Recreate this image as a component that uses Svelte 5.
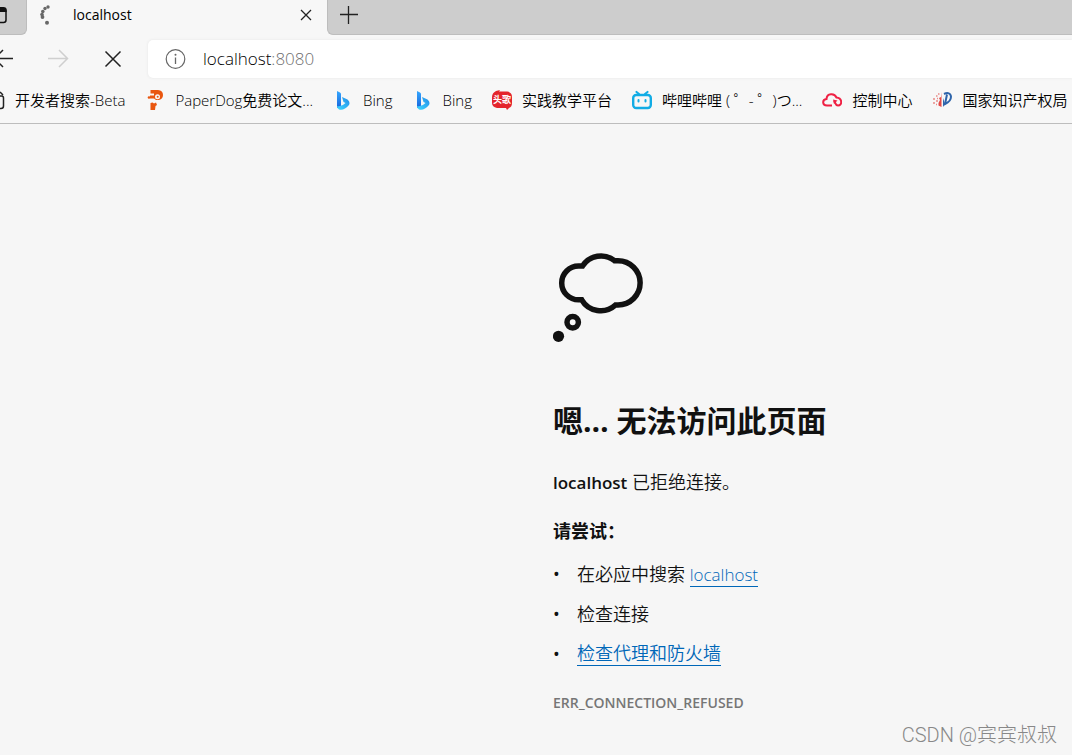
<script lang="ts">
  interface Bookmark {
    icon: string;
    label: string;
  }

  const bookmarks: Bookmark[] = [
    { icon: 'paperdog', label: 'PaperDog免费论文...' },
    { icon: 'bing', label: 'Bing' },
    { icon: 'bing', label: 'Bing' },
    { icon: 'touge', label: '实践教学平台' },
    { icon: 'bilibili', label: '哔哩哔哩 ( ゜- ゜)つ...' },
    { icon: 'cloud', label: '控制中心' },
    { icon: 'patent', label: '国家知识产权局' }
  ];

  let address = $state('localhost:8080');
  let host = $derived(address.split(':')[0]);
</script>

<div class="browser">
  <header>
    <div class="tabs">
      <button class="tab-actions" aria-label="Tab actions">
        <svg width="10" height="28" viewBox="0 0 10 28">
          <path d="M0 9H3.500Q6 9 6 11.500V20Q6 22.500 3.500 22.500H0" fill="none" stroke="#111" stroke-width="1.500" />
          <path d="M0 7H3.500Q6.700 7 6.700 10V12H0Z" fill="#111" />
        </svg>
      </button>
      <div class="tab">
        <svg width="20" height="24" viewBox="0 0 20 24" fill="#686868">
          <circle cx="13" cy="4" r="1.700" />
          <circle cx="10" cy="5.500" r="1.700" />
          <circle cx="7.800" cy="8.500" r="1.800" />
          <circle cx="7" cy="11.500" r="1.800" />
          <circle cx="7.500" cy="14" r="1.900" />
          <circle cx="12" cy="19.700" r="2" />
        </svg>
        <span class="tab-title">{host}</span>
        <button class="tab-close" aria-label="Close tab">
          <svg width="12" height="12" viewBox="0 0 12 12">
            <path d="M1 1L11 11M11 1L1 11" stroke="#222" stroke-width="1.300" />
          </svg>
        </button>
      </div>
      <div class="strip">
        <button aria-label="New tab">
          <svg width="20" height="20" viewBox="0 0 20 20">
            <path d="M9.500 1V19M1 9.500H19" stroke="#222" stroke-width="1.300" />
          </svg>
        </button>
      </div>
    </div>

    <nav class="toolbar">
      <button class="back" aria-label="Back">
        <svg width="14" height="20" viewBox="0 0 14 20">
          <path d="M13 9.500H-5M3 1L-5.500 9.500L3 18" fill="none" stroke="#222" stroke-width="1.500" />
        </svg>
      </button>
      <button class="forward" aria-label="Forward" disabled>
        <svg width="22" height="20" viewBox="0 0 22 20">
          <path d="M0 9.500H19M11 1L19.500 9.500L11 18" fill="none" stroke="#cfcfcf" stroke-width="1.500" />
        </svg>
      </button>
      <button class="stop" aria-label="Stop">
        <svg width="18" height="18" viewBox="0 0 18 18">
          <path d="M1.500 1.500L16.500 16.500M16.500 1.500L1.500 16.500" stroke="#222" stroke-width="1.500" />
        </svg>
      </button>
      <div class="address">
        <button aria-label="Site information">
          <svg width="22" height="22" viewBox="0 0 22 22">
            <circle cx="11.500" cy="11" r="9.300" fill="none" stroke="#666" stroke-width="1.200" />
            <path d="M11.500 9.500V16" stroke="#666" stroke-width="1.300" />
            <circle cx="11.500" cy="6.700" r="1" fill="#666" />
          </svg>
        </button>
        <a class="url" href="http://localhost:8080">{host}<span class="port">:8080</span></a>
      </div>
    </nav>

    <nav class="bookmarks">
      <a href="#beta" class="first">
        <svg width="5" height="20" viewBox="0 0 5 20">
          <path d="M0 2L3 5M0 6H1.500Q3.500 6 3.500 8V16Q3.500 18.500 1 18.500H0" fill="none" stroke="#222" stroke-width="1.500" />
        </svg>
        <span>开发者搜索-Beta</span>
      </a>
      {#each bookmarks as bookmark}
        <a href="#{bookmark.icon}">
          <svg width="20" height="20" viewBox="0 0 20 20">
            {#if bookmark.icon === 'paperdog'}
              <path d="M5.500 0H13Q18 0.500 18 5Q18 9 14 10H11L9 8.500H5V5.500H9V3.500H5.500Z" fill="#e9560f" />
              <path d="M5.500 13L7.500 12.500L9 13.500L11 12.500L12 15L10.500 16L10 20H5.500Z" fill="#e9560f" />
              <circle cx="12.500" cy="6.800" r="2.500" fill="#f7f7f7" />
              <circle cx="12.700" cy="6.800" r="1" fill="#e9560f" />
              <circle cx="4" cy="7.500" r="1.300" fill="#e9560f" />
            {:else if bookmark.icon === 'bing'}
              <defs>
                <linearGradient id="bing-stem" x1="0" y1="0" x2="0" y2="1">
                  <stop offset="0" stop-color="#36a8ff" />
                  <stop offset="1" stop-color="#1764dc" />
                </linearGradient>
                <linearGradient id="bing-bowl" x1="0" y1="1" x2="1" y2="0">
                  <stop offset="0" stop-color="#3ed8ff" />
                  <stop offset="1" stop-color="#248be8" />
                </linearGradient>
              </defs>
              <path d="M4 1L7 2.500Q8 3 8 4V16L4 18Z" fill="url(#bing-stem)" />
              <path d="M9 7L14.500 9.500Q17.500 12 16 15Q11 21 6 19.500Q4 18.500 4 16Q9 17 12.500 13L10.500 12Z" fill="url(#bing-bowl)" />
            {:else if bookmark.icon === 'touge'}
              <path d="M4 1L8 0L7 1.500H15Q20 2 20 7V13Q20 17 17 18L15 20L14 18H5Q0 17 0 13V7Q0 3 4 1Z" fill="#e4252c" />
              <text x="10" y="13" text-anchor="middle" class="badge-text">头歌</text>
            {:else if bookmark.icon === 'bilibili'}
              <rect x="1.200" y="5" width="17.600" height="13" rx="3" fill="none" stroke="#11ace5" stroke-width="2.400" />
              <path d="M4.500 2L7 4M15.500 2L13 4" stroke="#11ace5" stroke-width="2.200" stroke-linecap="round" />
              <path d="M6.500 10V11.500M13.500 10V11.500" stroke="#11ace5" stroke-width="2" stroke-linecap="round" />
            {:else if bookmark.icon === 'cloud'}
              <path d="M10 15.500H5C0 15.500 0 9.500 4.500 9C5 3 12.500 3 14.500 7.500C20.500 8 20.500 15.500 16 15.500C13 15.500 14 13 12 11" fill="none" stroke="#ef2144" stroke-width="2" />
              <path d="M11 9.500L15.500 10.500L12 14Z" fill="#ef2144" />
            {:else}
              <path d="M9.500 2V17L6.500 15.500V13L8 10L7 8L9 7Z" fill="#e34845" />
              <path d="M12 4C20 0 22 10 13 14L15 4.500" fill="none" stroke="#2e64aa" stroke-width="2" />
              <path d="M11 8V17L13 14Z" fill="#2e64aa" />
              <path d="M1 9H3M4 6H5.500M4 11H6M1 13H3M5 8.500H6M4 14.500H5M6 4H7.500" stroke="#e98a88" stroke-width="1.500" />
            {/if}
          </svg>
          <span>{bookmark.label}</span>
        </a>
      {/each}
    </nav>
  </header>

  <main>
    <svg class="thought" width="92" height="92" viewBox="0 0 92 92">
      <path
        d="M29.500 16H25.600A16.900 16.900 0 0 0 25.600 49.800H28.700A22 22 0 0 0 62.500 55H65A22.100 22.100 0 0 0 65 10.700H61.500A22 22 0 0 0 29.500 16Z"
        fill="none"
        stroke="#111"
        stroke-width="5.500"
      />
      <circle cx="19.700" cy="72.300" r="5.700" fill="none" stroke="#111" stroke-width="5.500" />
      <circle cx="5.500" cy="86.300" r="5.600" fill="#111" />
    </svg>
    <h1>嗯… 无法访问此页面</h1>
    <p class="reason"><strong>{host}</strong> 已拒绝连接。</p>
    <h2>请尝试：</h2>
    <ul>
      <li><span>在必应中搜索 <a class="host-link" href="#search">{host}</a></span></li>
      <li><span>检查连接</span></li>
      <li><a href="#proxy">检查代理和防火墙</a></li>
    </ul>
    <p class="code">ERR_CONNECTION_REFUSED</p>
  </main>
  <div class="watermark">CSDN @宾宾叔叔</div>
</div>

<style>
  :global(body) {
    margin: 0;
    background: #f6f6f6;
  }

  .browser {
    position: relative;
    box-sizing: border-box;
    min-height: 100vh;
    overflow: hidden;
    background: #f6f6f6;
    color: #111;
    font-family: "Open Sans", "Noto Sans CJK SC", sans-serif;
  }

  header {
    background: #f7f7f7;
    border-bottom: 1px solid #bdbdbd;
    color: #000;
  }

  button {
    display: flex;
    align-items: center;
    padding: 0;
    border: 0;
    background: none;
  }

  svg {
    display: block;
    flex: none;
  }

  a {
    color: inherit;
    text-decoration: none;
  }

  .tabs {
    display: flex;
    height: 35px;
    font-size: 14px;
    line-height: 20px;
  }

  .tab-actions {
    align-items: flex-start;
    width: 27px;
    background: #cdcdcd;
    border-right: 1px solid #bdbdbd;
    border-bottom: 1px solid #bdbdbd;
    border-radius: 0 0 6px 0;
  }

  .tab {
    display: flex;
    align-items: center;
    box-sizing: border-box;
    width: 300px;
    padding: 0 15px 5px 8px;
  }

  .tab-title {
    flex: 1;
    padding-left: 18px;
  }

  .strip {
    display: flex;
    flex: 1;
    padding-left: 11px;
    padding-bottom: 5px;
    background: #cdcdcd;
    border-left: 1px solid #bdbdbd;
    border-bottom: 1px solid #bdbdbd;
    border-radius: 0 0 0 6px;
  }

  .toolbar {
    display: flex;
    align-items: center;
    height: 47px;
  }

  .forward {
    margin-left: 34px;
  }

  .stop {
    margin-left: 34px;
  }

  .address {
    display: flex;
    flex: 1;
    align-items: center;
    gap: 17px;
    height: 38px;
    margin-left: 26px;
    padding-left: 16px;
    background: #fff;
    border-radius: 5px 0 0 5px;
    box-shadow: 0 0 3px #e4e4e4;
  }

  .url {
    font-size: 17px;
    font-weight: 350;
  }

  .port {
    color: #707070;
  }

  .bookmarks {
    display: flex;
    align-items: center;
    box-sizing: border-box;
    gap: 20px;
    height: 41px;
    padding-bottom: 5px;
    font-size: 15px;
    font-weight: 350;
    line-height: 20px;
    white-space: nowrap;
  }

  .bookmarks a {
    display: flex;
    flex: none;
    align-items: center;
    gap: 10px;
  }

  .badge-text {
    fill: #fff;
    font-size: 9px;
    font-weight: 700;
  }

  main {
    margin-left: calc(50% + 17px);
    padding-top: 126px;
    font-size: 18px;
    font-weight: 350;
    line-height: 24px;
  }

  h1 {
    margin: 59px 0 0;
    font-size: 30px;
    font-weight: 700;
    line-height: 40px;
  }

  .reason {
    margin: 29px 0 0;
  }

  strong {
    font-size: 17px;
    font-weight: 600;
  }

  h2 {
    margin: 24px 0 0;
    font-size: 18px;
    font-weight: 700;
    line-height: 24px;
  }

  ul {
    margin: 19px 0 0;
    padding: 0;
    list-style: none;
  }

  li {
    display: flex;
    margin-bottom: 16px;
  }

  li::before {
    content: "•";
    width: 24px;
    font-weight: 400;
  }

  li a {
    color: #0067b8;
    border-bottom: 1px solid #0067b8;
    line-height: 22px;
  }

  .host-link {
    font-size: 17px;
  }

  .code {
    margin: 0;
    padding-top: 9px;
    color: #767676;
    font-size: 14px;
    font-weight: 600;
  }

  .watermark {
    position: absolute;
    right: 15px;
    bottom: 8px;
    color: #888;
    font-family: Roboto, "Noto Sans CJK SC", sans-serif;
    font-size: 20px;
    font-weight: 300;
    line-height: 24px;
  }
</style>
